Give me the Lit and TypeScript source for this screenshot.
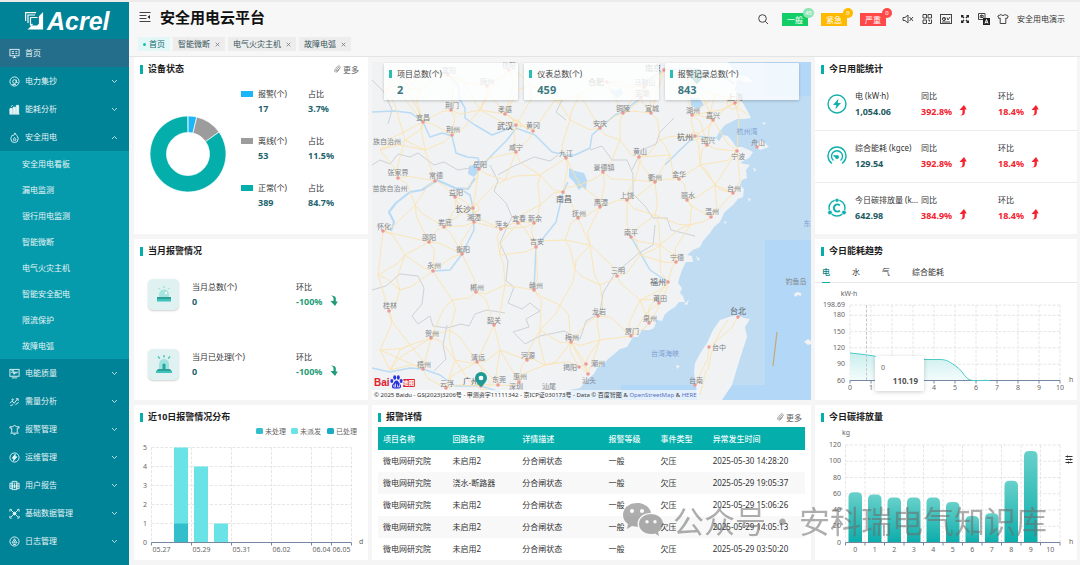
import { LitElement, html, svg, css } from "lit";
import { customElement, property } from "lit/decorators.js";
import { classMap } from "lit/directives/class-map.js";

const FONT = css`"Noto Sans", "Noto Sans CJK SC", sans-serif`;

const reset = css`
  * { box-sizing: border-box; }
  button { font: inherit; color: inherit; background: none; border: 0; padding: 0; text-align: left; }
  a { color: inherit; text-decoration: none; }
  ul, dl, dd, dt, h1, h2, p { margin: 0; padding: 0; list-style: none; font-weight: inherit; font-size: inherit; }
  svg { display: block; }
`;

/* ---------- sidebar ---------- */

const icons: Record<string, unknown> = {
  home: svg`<rect x="1" y="1.5" width="10" height="7" /><path d="M3 4h2.500M3 6h2.500M7 4h2M7 6h2M4 10.500h4M6 8.500v2" />`,
  meter: svg`<circle cx="6" cy="6" r="5" /><circle cx="6" cy="6" r="2" /><path d="M8 4v3q.6 1.400 1.500 0M3.500 9.300h4" />`,
  energy: svg`<path class="fill" d="M1 5h2.500v5.500H1zM4.500 3.500h2.500v7H4.500zM8 1.500h2.500v9H8z" /><path d="M.5 11h11M2 3l2-1.500" />`,
  flame: svg`<path d="M6.500 1c.5 2 3.500 3.500 3.500 6.500a3.800 3.800 0 0 1-8 0C2 5.500 3 5 3.500 3.500 5 4.500 6 3 6.500 1zM6 6c1.200 1 1.800 1.700 1.300 3H5c-.6-1 .3-2 1-3z" />`,
  quality: svg`<rect x="1" y="1.500" width="10" height="7.500" /><path d="M2.500 5h1l1-1.500 1 3.500 1-3 1 2 .8-1.500H10M3 10.800h6M2.500 3h3" />`,
  demand: svg`<path d="M1 8l2.500-2.500L5.500 8 9.500 3M7.500 3H10v2.300M1.500 10.500l3-1M7 9.500L10.500 7" /><circle cx="4" cy="4" r=".8" />`,
  alarm: svg`<path d="M3 9.500V4.500H1V3h2.500L6 1.500 8.500 3H11v1.500H9v5M1.500 10h9M5 11.500h2" />`,
  ops: svg`<circle cx="6" cy="6" r="5" /><path class="fill" d="M6.800 2.500L3.500 6.700h2L5 9.500l3.500-4.300h-2z" />`,
  report: svg`<path d="M3.500 1.500h5v9h-5zM1 3.500h2.500v6H1zM8.500 3.500H11v6H8.500zM1 6.500h10M5 3.500h2M5 8.500h2M6 4.500v4" />`,
  base: svg`<path d="M2 2l8 8M10 2L2 10M1 4V1.500h2M11 4V1.500H9M1 8.500V11h2M11 8.500V11H9" /><circle class="fill" cx="6" cy="6" r="1.500" />`,
  log: svg`<circle cx="6" cy="6" r="5" /><path d="M6 3L3.300 7.500h5.400zM4.500 9.300h3M6 5v1.500" />`,
};

const menu = [
  ["home", "首页", ""],
  ["meter", "电力集抄", "down"],
  ["energy", "能耗分析", "down"],
  ["flame", "安全用电", "up"],
  ["quality", "电能质量", "down"],
  ["demand", "需量分析", "down"],
  ["alarm", "报警管理", "down"],
  ["ops", "运维管理", "down"],
  ["report", "用户报告", "down"],
  ["base", "基础数据管理", "down"],
  ["log", "日志管理", "down"],
];
const submenu = ["安全用电看板", "漏电监测", "银行用电监测", "智能微断", "电气火灾主机", "智能安全配电", "限流保护", "故障电弧"];

@customElement("side-menu")
class SideMenu extends LitElement {
  static styles = [reset, css`
    :host { display: block; background: #008297; color: #e6f5f6; font: 8px/12px ${FONT}; }
    .logo { display: flex; align-items: center; height: 37px; padding: 0 0 0 25px; gap: 3px; color: #fff; }
    .word { font: italic bold 25px/30px "Liberation Sans", sans-serif; }
    .item { display: flex; align-items: center; gap: 5px; width: 100%; height: 28px; padding: 0 11px 0 9px; }
    .active { background: #246d8b; }
    .label { flex: 1; }
    .icon { fill: none; stroke: currentColor; stroke-width: 1; }
    .icon .fill { fill: currentColor; }
    .chev { fill: none; stroke: currentColor; stroke-width: .8; }
    .up { transform: rotate(180deg); }
    .sub { background: #069bac; }
    .sub a { display: block; padding: 7px 22px; }
  `];
  render() {
    return html`
      <div class="logo">
        <svg width="19" height="18" viewBox="0 0 19 18" fill="none" stroke="currentColor" stroke-width="1.200">
          <path d="M.6 9V.6H11M3 11V3h7" />
          <path fill="currentColor" d="M17.500 1.500V17H4l3-3h5.500l2-2V4.500z" />
          <path d="M5.500 13V5.500H12.500M5.500 14l2-2" />
        </svg>
        <span class="word">Acrel</span>
      </div>
      <nav>
        <ul>${menu.map(([icon, label, arrow], i) => html`
          <li>
            <button class=${classMap({ item: true, active: i === 0 })}>
              <svg class="icon" width="11" height="11" viewBox="0 0 12 12">${icons[icon]}</svg>
              <span class="label">${label}</span>
              ${arrow ? html`<svg class=${classMap({ chev: true, up: arrow === "up" })} width="7" height="5" viewBox="0 0 7 5"><path d="M1 1l2.500 2.500L6 1" /></svg>` : ""}
            </button>
            ${arrow === "up" ? html`<ul class="sub">${submenu.map((s) => html`<li><a href="#">${s}</a></li>`)}</ul>` : ""}
          </li>`)}
        </ul>
      </nav>`;
  }
}

/* ---------- header ---------- */

@customElement("top-bar")
class TopBar extends LitElement {
  static styles = [reset, css`
    :host { display: block; background: #f7f7f7; border-bottom: 1px solid #e4e4e4; font: 8px/12px ${FONT}; color: #333; }
    .row { display: flex; align-items: center; height: 34px; padding: 0 15px 0 10px; }
    .title { flex: 1; padding-left: 9px; font-size: 15px; line-height: 24px; font-weight: 700; color: #111; padding-bottom: 4px; }
    .toggle { padding-bottom: 4px; }
    .alarms { display: flex; align-items: center; gap: 13px; margin-right: 16px; }
    .alarm { position: relative; width: 26px; height: 13px; color: #fff; text-align: center; line-height: 13px; }
    .ok { background: #13ce66; }
    .warn { background: #ffba00; }
    .bad { background: #ff4949; }
    .badge { position: absolute; right: -6px; top: -5px; min-width: 10px; height: 10px; padding: 0 2px; border-radius: 5px; font-size: 6px; line-height: 10px; background: inherit; }
    .pale { background: #8fe5b6; }
    .tools { display: flex; align-items: center; gap: 7px; margin-right: 8px; }
    .ico { fill: none; stroke: #444; stroke-width: 1; }
    .ico .f { fill: #222; stroke: none; }
    .ico .w { stroke: #fff; }
    .tabs { display: flex; gap: 3px; padding: 1px 9px 5px; }
    .tab { display: flex; align-items: center; height: 14px; padding: 0 5px; gap: 5px; background: #ededed; color: #345358; }
    .on { background: #e3f8f6; gap: 3px; color: #176a70; }
    .dot { width: 3px; height: 3px; border-radius: 50%; background: #14c0b5; }
    .x { fill: none; stroke: #777; stroke-width: .8; }
  `];
  render() {
    const ico = (label: string, body: unknown) => html`
      <button aria-label=${label}><svg class="ico" width="12" height="12" viewBox="0 0 12 12">${body}</svg></button>`;
    return html`
      <div class="row">
        <button class="toggle" aria-label="折叠菜单">
          <svg class="ico" width="12" height="12" viewBox="0 0 12 12"><path d="M.5 1.500h11M.5 4.500h7M.5 7.500h7M.5 10.500h11" /><path class="f" d="M11 4v4L8.500 6z" /></svg>
        </button>
        <h1 class="title">安全用电云平台</h1>
        <div class="alarms">
          ${ico("搜索", svg`<circle cx="5.500" cy="5.500" r="3.800" /><path d="M8.300 8.300L11 11" />`)}
          <button class="alarm ok">一般<span class="badge pale">45</span></button>
          <button class="alarm warn">紧急<span class="badge">0</span></button>
          <button class="alarm bad">严重<span class="badge">0</span></button>
        </div>
        <div class="tools">
          ${ico("静音", svg`<path d="M1 4.500h2L6 2v8L3 7.500H1zM7.500 4l3.500 4M11 4L7.500 8" />`)}
          ${ico("二维码", svg`<path d="M2 1.500h3.500V5H2zM7 1.500h3.500V5H7zM2 7h3.500v3.500H2zM7 7h1.500v1.500M10.500 6.500v4H7" />`)}
          ${ico("大屏", svg`<rect x=".5" y="1.500" width="11" height="9" /><circle cx="4" cy="6" r="1.600" /><path d="M7 4.500l1 2.500 2-3M2 9h8M4 4.400V6h1.600" />`)}
          ${ico("全屏", svg`<path class="f" d="M2 2h3L4 3l1.500 1.500-1 1L3 4 2 5zM10 2v3L9 4 7.500 5.500l-1-1L8 3 7 2zM2 10V7l1 1 1.500-1.500 1 1L4 9l1 1zM10 10H7l1-1-1.500-1.500 1-1L9 8l1-1z" />`)}
          ${ico("语言", svg`<path d="M.5.5H7v6H.5zM2 2.500h3.500M3.700 1.500v3.500M2.200 3v1.500h3V3" /><rect class="f" x="5" y="5" width="7" height="7" /><path class="w" d="M7 10.500L8.500 6.500 10 10.500M7.500 9.300h2" />`)}
          ${ico("主题", svg`<path d="M4 1.500L.8 3l1 2.500 1.400-.5v5.500h5.600V5l1.400.5 1-2.500L8 1.500c-.8 1.300-3.200 1.300-4 0z" />`)}
        </div>
        <span>安全用电演示</span>
      </div>
      <nav class="tabs">
        <a class="tab on" href="#"><span class="dot"></span>首页</a>
        ${["智能微断", "电气火灾主机", "故障电弧"].map((t) => html`
          <a class="tab" href="#">${t}<svg class="x" width="5" height="5" viewBox="0 0 5 5"><path d="M.7.7l3.600 3.600M4.300.7L.7 4.300" /></svg></a>`)}
      </nav>`;
  }
}

/* ---------- card shell ---------- */

@customElement("panel-card")
class PanelCard extends LitElement {
  @property() heading = "";
  @property({ type: Boolean }) more = false;
  static styles = [reset, css`
    :host { display: flex; flex-direction: column; background: #fff; font: 8px/15px ${FONT}; }
    .head { display: flex; align-items: center; height: 22px; padding: 2px 9px 0 6px; gap: 5px; }
    .bar { width: 3px; height: 9px; background: #04aeab; }
    .title { flex: 1; font-size: 9px; line-height: 20px; font-weight: 700; color: #1c1c1c; }
    .more { display: flex; align-items: center; gap: 2px; color: #666; }
  `];
  render() {
    return html`
      <div class="head">
        <span class="bar"></span>
        <h2 class="title">${this.heading}</h2>
        ${this.more ? html`<a class="more" href="#"><svg width="7" height="8" viewBox="0 0 7 8" fill="none" stroke="#888" stroke-width=".8"><path d="M5 2L2.200 5.200q-.3 1 .8.8L6 3q.8-1.500-.5-2T3.500 1.500L1 4.500Q0 6.500 1.500 7T4 6l1.500-1.500" /></svg>更多</a>` : ""}
      </div>
      <slot></slot>`;
  }
}

const arrowUp = html`<svg class="arrow" width="8" height="11" viewBox="0 0 8 11" fill="#f5222d"><path d="M5 0l2.800 4.500H5.800V8Q5.500 10.500 1 10.500 3.500 9.500 3.500 8V5H.5z" /></svg>`;
const arrowDown = html`<svg class="arrow" width="8" height="11" viewBox="0 0 8 11" fill="#1f9c77"><path d="M5 11L7.800 6.500H5.800V3Q5.500.5 1 .5 3.500 1.500 3.500 3V6H.5z" /></svg>`;

/* ---------- device status ---------- */

const devices = [
  { name: "报警", count: 17, share: 3.7, color: "#1bb6f7" },
  { name: "离线", count: 53, share: 11.5, color: "#9c9c9c" },
  { name: "正常", count: 389, share: 84.7, color: "#04aeab" },
];

@customElement("device-status")
class DeviceStatus extends LitElement {
  static styles = [reset, css`
    :host { display: flex; font: 8px/15px ${FONT}; color: #333; }
    .ring { flex: 107; display: flex; justify-content: center; align-items: flex-start; padding-top: 36px; }
    .ring svg { width: 78px; height: 78px; }
    .list { flex: 127; display: grid; align-content: start; gap: 17px; padding: 7px 0; }
    .row { display: grid; grid-template-columns: 12px 45px 1fr; column-gap: 5px; }
    .sw { width: 12px; height: 6px; margin-top: 5px; grid-row: span 2; }
    .num { grid-column: 2; font-size: 9px; font-weight: 700; color: #22636d; }
    .pct { grid-column: 3; }
  `];
  render() {
    let from = 0;
    const pt = (p: number, r: number) => {
      const a = (p / 100) * 2 * Math.PI;
      return `${39 + r * Math.sin(a)} ${39 - r * Math.cos(a)}`;
    };
    return html`
      <div class="ring">
        <svg viewBox="0 0 78 78" role="img" aria-label="设备状态">
          ${devices.map((d) => {
            const a = from;
            const b = (from += d.share);
            const big = b - a > 50 ? 1 : 0;
            return svg`<path fill=${d.color} stroke="#fff" stroke-width=".7" d="M${pt(a, 38)}A38 38 0 ${big} 1 ${pt(b, 38)}L${pt(b, 21.5)}A21.500 21.500 0 ${big} 0 ${pt(a, 21.5)}Z" />`;
          })}
        </svg>
      </div>
      <div class="list">
        ${devices.map((d) => html`
          <div class="row">
            <span class="sw" style="background:${d.color}"></span><span>${d.name}(个)</span><span>占比</span>
            <span class="num">${d.count}</span><span class="num pct">${d.share}%</span>
          </div>`)}
      </div>`;
  }
}

/* ---------- month alarms ---------- */

@customElement("month-alarms")
class MonthAlarms extends LitElement {
  static styles = [reset, css`
    :host { display: grid; gap: 39px; padding: 18px 14px 20px; font: 8px/15px ${FONT}; color: #333; }
    .row { display: grid; grid-template-columns: 31px 11fr 7fr; column-gap: 13px; }
    .box { width: 31px; height: 31px; border-radius: 5px; background: #dff1f0; box-shadow: 0 1px 2px #00000030; display: grid; place-items: center; }
    .num { font-size: 9px; font-weight: 700; color: #22636d; }
    .down { display: flex; align-items: center; gap: 7px; color: #1f9c77; }
    .down .arrow { margin-bottom: 3px; }
  `];
  render() {
    const lamps = [
      svg`<path fill="#a6e4e0" d="M5 12V9.500a5 5 0 0 1 10 0V12z" /><path fill="#2f9f98" d="M3 12h14v4H3z" /><path fill="#3cc4bc" d="M3 14h14v2.500H3z" /><circle cx="12" cy="8" r="1.200" fill="#fff" /><path stroke="#8adad5" d="M10 1v2M4.500 3L6 4.500M15.500 3L14 4.500" />`,
      svg`<path fill="#9fe2de" d="M5 14V9a5 5 0 0 1 10 0v5z" /><path fill="#24a8a1" d="M8.500 14V9.500q1.500-2 3 0V14z" /><path fill="#2f9f98" d="M4 14h12l2 2.500H2z" /><path fill="#3cc4bc" d="M2 16h16v2H2z" /><path stroke="#44c5be" stroke-width="1.400" d="M10 0v2.500M4 1.500l1.800 2M16 1.500l-1.800 2" />`,
    ];
    return ["当月总数(个)", "当月已处理(个)"].map((label, i) => html`
      <div class="row">
        <span class="box"><svg width="20" height="20" viewBox="0 0 20 20">${lamps[i]}</svg></span>
        <div><p>${label}</p><p class="num">0</p></div>
        <div><p>环比</p><p class="num down">-100%${arrowDown}</p></div>
      </div>`);
  }
}

/* ---------- today energy ---------- */

@customElement("today-energy")
class TodayEnergy extends LitElement {
  static styles = [reset, css`
    :host { flex: 1; display: flex; flex-direction: column; font: 8px/16px ${FONT}; color: #333; }
    .row { flex: 1; display: grid; grid-template-columns: 26px 64px 75px 1fr; column-gap: 2px; align-items: center; padding: 0 0 2px 12px; border-bottom: 1px solid #ececec; }
    .row:last-child { border-bottom: 0; }
    .name { white-space: nowrap; overflow: hidden; text-overflow: ellipsis; }
    .num { font-size: 9px; font-weight: 700; color: #1d5a63; }
    .up { display: flex; align-items: center; gap: 7px; color: #f5222d; }
    .up .arrow { margin-bottom: 3px; }
  `];
  render() {
    const rows: [unknown, string, string, string][] = [
      [svg`<circle cx="10" cy="10" r="9" /><path class="f" fill="#12b0ad" stroke="none" d="M11.500 4.500L6 11h3.300l-1 4.500L14 9h-3.300z" />`, "电 (kW·h)", "1,054.06", "392.8%"],
      [svg`<path d="M5 17.500a9 9 0 1 1 10 0M6.500 14.500a5.500 5.500 0 1 1 7 0" /><circle cx="10" cy="11" r="2" fill="#12b0ad" stroke="none" /><path d="M6.500 9.500L10 11" />`, "综合能耗 (kgce)", "129.54", "392.8%"],
      [svg`<circle cx="10" cy="10" r="8" /><path stroke-width="2" d="M12.800 7.500a3.500 3.500 0 1 0 0 5" /><g fill="#12b0ad" stroke="#fff" stroke-width=".6"><circle cx="10" cy="2.300" r="2" /><circle cx="3" cy="14.500" r="2.300" /><circle cx="17" cy="14.500" r="2.300" /></g>`, "今日碳排放量 (kg)", "642.98", "384.9%"],
    ];
    return rows.map(([icon, name, value, yoy]) => html`
      <div class="row">
        <svg width="20" height="20" viewBox="0 0 20 20" fill="none" stroke="#12b0ad" stroke-width="1.400">${icon}</svg>
        <div class="name"><p class="name">${name}</p><p class="num">${value}</p></div>
        <div><p>同比</p><p class="num up">${yoy}${arrowUp}</p></div>
        <div><p>环比</p><p class="num up">18.4%${arrowUp}</p></div>
      </div>`);
  }
}

/* ---------- charts ---------- */

const chartStyles = css`
  :host { display: block; font: 7px/12px ${FONT}; }
  .chart { width: 100%; height: auto; font-size: 7px; fill: #666; }
  .mid { text-anchor: middle; }
  .end { text-anchor: end; }
  .grid { fill: none; stroke: #e6e6e6; stroke-width: 1; stroke-dasharray: 3 1.500; }
  .pointer { stroke: #c4c8cc; }
  .axis { fill: none; stroke: #7488a3; stroke-width: 1; }
`;

@customElement("alarm-chart")
class AlarmChart extends LitElement {
  static styles = [reset, chartStyles];
  render() {
    const x = (i: number) => 17.5 + i * 20;
    const y = (v: number) => 115.5 - v * 19;
    const days: [number, string][] = [[0, "05.27"], [2, "05.29"], [4, "05.31"], [6, "06.02"], [8, "06.04"], [9, "06.05"]];
    const legend: [number, string, string][] = [[122, "#32bfcb", "未处理"], [157, "#6ae3e6", "未派发"], [193, "#1aacc6", "已处理"]];
    return html`
      <svg class="chart" viewBox="0 0 234 133" role="img" aria-label="近10日报警情况分布">
        ${legend.map(([lx, c, t]) => svg`<rect x=${lx} y="1" width="7" height="6" rx="1.500" fill=${c} /><text x=${lx + 9} y="6.500">${t}</text>`)}
        ${[0, 1, 2, 3, 4, 5].map((v) => svg`
          ${v ? svg`<path class="grid" d="M17.500 ${y(v)}H217.500" />` : ""}
          <text class="end" x="13" y=${y(v) + 2}>${v}</text>`)}
        ${[...days.map((d) => d[0]), 10].map((i) => svg`<path class="grid" d="M${x(i)} 20.500V115.500" />`)}
        <rect x="40" y=${y(5)} width="14" height="95" fill="#6ae3e6" />
        <rect x="40" y=${y(1)} width="14" height="19" fill="#32bfcb" />
        <rect x="60" y=${y(4)} width="14" height="76" fill="#6ae3e6" />
        <rect x="80" y=${y(1)} width="14" height="19" fill="#6ae3e6" />
        <path class="axis" d="M17.500 115.500H217.500${[...days.map((d) => d[0]), 10].map((i) => `M${x(i)} 115.500v3`).join("")}" />
        ${days.map(([i, t]) => svg`<text class="mid" x=${x(i) + 10} y="125">${t}</text>`)}
        <text x="225" y="117">d</text>
      </svg>`;
  }
}

@customElement("trend-chart")
class TrendChart extends LitElement {
  static styles = [reset, chartStyles, css`
    .tabs { display: flex; gap: 22px; height: 22px; padding-left: 7px; border-bottom: 1px solid #e8e8e8; font-size: 8px; line-height: 20px; color: #333; }
    .tab { height: 22px; }
    .on { color: #08807f; font-weight: 500; border-bottom: 1px solid #04aeab; }
    .line { fill: none; stroke: #4ccac6; }
    .shadow { filter: drop-shadow(0 1px 2px #0003); }
    .tip { font-size: 8px; font-weight: 700; fill: #555; }
  `];
  render() {
    const x = (i: number) => 35 + i * 21;
    const y = (v: number) => 97.5 - (v - 60) * 0.5435;
    const ticks: [number, string][] = [[198.69, "198.69"], [180, "180"], [150, "150"], [120, "120"], [90, "90"], [60, "60"]];
    const curve = "M35 70C45 71 55 72 64 74C80 76 95 76.500 109 76.500H125C132 76.500 135 79 142 84C149 89 150 97 158 97.500C163 98 168 97 175 97.500";
    return html`
      <div class="tabs" role="tablist">
        ${["电", "水", "气", "综合能耗"].map((t, i) => html`<button role="tab" class=${classMap({ tab: true, on: i === 0 })}>${t}</button>`)}
      </div>
      <svg class="chart" viewBox="0 0 262 117" role="img" aria-label="今日能耗趋势">
        <defs><linearGradient id="area" x2="0" y2="1"><stop stop-color="#c9efee" /><stop offset="1" stop-color="#f4fcfc" /></linearGradient></defs>
        <text class="mid" x="34" y="12.500">kW·h</text>
        ${ticks.map(([v, t]) => svg`<path class="grid" d="M35 ${y(v)}H245" /><text class="end" x="30" y=${y(v) + 2}>${t}</text>`)}
        ${Array.from({ length: 11 }, (_, i) => svg`<path class="grid" d="M${x(i)} 22V97.500" /><text class="mid" x=${x(i)} y="107">${i}</text>`)}
        <path fill="url(#area)" d="${curve}H35Z" />
        <path class="axis" d="M35 97.500H245${Array.from({ length: 11 }, (_, i) => `M${x(i)} 97.500v3`).join("")}" />
        <path class="line" d=${curve} />
        <path class="grid pointer" d="M51.500 22V97.500" />
        <text x="254" y="99">h</text>
        <rect class="shadow" x="60" y="73" width="49" height="35" rx="2" fill="#fff" />
        <text x="66" y="87">0</text>
        <text class="tip end" x="103" y="100.500">110.19</text>
      </svg>`;
  }
}

@customElement("carbon-chart")
class CarbonChart extends LitElement {
  static styles = [reset, chartStyles];
  render() {
    const data = [62, 59, 55.5, 55.5, 55.5, 50, 32.5, 36, 76, 112.5];
    const w = 19.5;
    const y = (v: number) => 115.5 - v * 0.8125;
    const seams = Array.from({ length: 12 }, (_, i) => 30.5 + i * w);
    return html`
      <svg class="chart" viewBox="0 0 262 133" role="img" aria-label="今日碳排放量">
        <defs><linearGradient id="bar" x2="0" y2="1"><stop stop-color="#68d0ca" /><stop offset="1" stop-color="#0badaa" /></linearGradient></defs>
        <text class="mid" x="31" y="7.500">kg</text>
        ${[0, 20, 40, 60, 80, 100, 120].map((v) => svg`
          ${v ? svg`<path class="grid" d="M30.500 ${y(v)}H245" />` : ""}<text class="end" x="26" y=${y(v) + 2}>${v}</text>`)}
        ${seams.map((s) => svg`<path class="grid" d="M${s} 18V115.500" />`)}
        ${data.map((v, i) => svg`<path fill="url(#bar)" d="M${33.5 + i * w} 115.500V${y(v) + 5}q0-5 5-5h3.500q5 0 5 5V115.500z" />`)}
        <path class="axis" d="M30.500 115.500H245${seams.map((s) => `M${s} 115.500v3`).join("")}" />
        ${Array.from({ length: 11 }, (_, i) => svg`<text class="mid" x=${40.25 + i * w} y="125">${i}</text>`)}
        <text x="254" y="117">h</text>
        <path stroke="#333" fill="none" d="M250.500 29.500h7M250.500 32.500h7M250.500 35.500h7M252.500 28.500v2M255.500 31.500v2M253.500 34.500v2" />
      </svg>`;
  }
}

/* ---------- alarm table ---------- */

@customElement("alarm-table")
class AlarmTable extends LitElement {
  static styles = [reset, css`
    :host { display: block; padding: 0 6px; font: 8px/12px ${FONT}; color: #333; }
    table { width: 100%; border-collapse: collapse; table-layout: fixed; }
    th, td { height: 22px; padding: 0 0 0 5px; text-align: left; font-weight: 400; white-space: nowrap; }
    th { height: 23px; background: #04aeab; color: #e9fbfa; font-weight: 500; }
    tbody tr:nth-child(even) { background: #f8f8f8; }
    .c1, .c2 { width: 16.3%; } .c3 { width: 20.2%; } .c4, .c5 { width: 12.2%; }
  `];
  render() {
    const rows = [
      ["未启用2", "2025-05-30 14:28:20"],
      ["浇水-断路器", "2025-05-29 19:05:37"],
      ["未启用2", "2025-05-29 15:06:26"],
      ["未启用2", "2025-05-29 14:05:13"],
      ["未启用2", "2025-05-29 03:50:20"],
    ];
    return html`
      <table>
        <thead><tr><th class="c1">项目名称</th><th class="c2">回路名称</th><th class="c3">详情描述</th><th class="c4">报警等级</th><th class="c5">事件类型</th><th>异常发生时间</th></tr></thead>
        <tbody>${rows.map(([loop, time]) => html`
          <tr><td>微电网研究院</td><td>${loop}</td><td>分合闸状态</td><td>一般</td><td>欠压</td><td>${time}</td></tr>`)}
        </tbody>
      </table>`;
  }
}

/* ---------- map ---------- */

/* name, label x, label y, dot x, dot y, large label */
const cities: [string, number, number, number, number, boolean?][] = [
  ["襄阳", 449, 70, 448, 75], ["信阳", 509, 65, 509, 70], ["随州", 487, 81, 487, 86], ["荆门", 452, 105, 451, 110],
  ["孝感", 505, 109, 505, 114], ["宜昌", 423, 117, 423, 122], ["荆州", 453, 129, 452, 135], ["武汉", 505, 126, 516, 125, true],
  ["黄冈", 533, 125, 533, 131], ["咸宁", 516, 147, 516, 152], ["九江", 566, 153, 566, 158], ["岳阳", 480, 164, 479, 169],
  ["张家界", 398, 172, 398, 178], ["常德", 436, 175, 435, 181], ["益阳", 456, 192, 455, 197], ["长沙", 463, 209, 473, 208, true],
  ["湘潭", 474, 217, 474, 222], ["娄底", 445, 222, 444, 227], ["宜春", 519, 218, 518, 223], ["新余", 535, 218, 534, 223],
  ["萍乡", 502, 224, 501, 229], ["南昌", 564, 199, 563, 192, true], ["抚州", 579, 213, 578, 218], ["怀化", 384, 226, 383, 231],
  ["合肥", 596, 82, 607, 82, true], ["南京", 653, 68, 664, 70, true], ["马鞍山", 645, 82, 644, 87], ["芜湖", 642, 93, 641, 98],
  ["铜陵", 623, 108, 623, 113], ["宣城", 652, 108, 651, 113], ["安庆", 600, 123, 600, 128], ["湖州", 693, 110, 692, 115],
  ["嘉兴", 713, 115, 713, 120], ["杭州", 685, 137, 695, 136, true], ["绍兴", 708, 140, 707, 145], ["上海", 735, 97, 735, 103, true],
  ["舟山", 758, 142, 757, 147], ["宁波", 738, 156, 737, 151], ["黄山", 640, 151, 639, 157], ["景德镇", 604, 167, 603, 172],
  ["衢州", 655, 177, 655, 182], ["金华", 679, 174, 679, 179], ["台州", 734, 188, 733, 193], ["上饶", 627, 195, 627, 200],
  ["丽水", 688, 195, 687, 200], ["鹰潭", 601, 202, 600, 207], ["温州", 712, 211, 711, 217], ["南平", 631, 232, 631, 237],
  ["邵阳", 429, 237, 429, 242], ["衡阳", 463, 249, 462, 254], ["吉安", 537, 241, 536, 247], ["永州", 434, 265, 433, 271],
  ["郴州", 477, 287, 476, 292], ["赣州", 536, 285, 534, 290], ["桂林", 390, 305, 389, 311], ["韶关", 494, 320, 494, 325],
  ["龙岩", 599, 311, 598, 316], ["贺州", 432, 333, 431, 338], ["梅州", 572, 337, 571, 342], ["清远", 478, 357, 477, 362],
  ["河源", 528, 355, 527, 360], ["梧州", 424, 364, 423, 369], ["潮州", 598, 363, 586, 364], ["揭阳", 570, 367, 579, 367],
  ["汕头", 589, 380, 588, 374], ["惠州", 520, 376, 519, 382], ["云浮", 447, 383, 446, 388], ["广州", 471, 381, 481, 386, true],
  ["东莞", 499, 379, 498, 385], ["宁德", 677, 257, 676, 262], ["三明", 618, 270, 617, 276], ["福州", 658, 282, 668, 282, true],
  ["莆田", 660, 298, 659, 303], ["泉州", 650, 318, 649, 323], ["厦门", 632, 331, 631, 336],
  ["台北", 738, 311, 738, 317, true], ["台中", 719, 347, 709, 347], ["台南", 696, 380, 695, 385],
];

/* junctions that carry roads but no label */
const junctions: [number, number][] = [
  [385, 90], [405, 140], [380, 150], [415, 205], [405, 255], [378, 275], [400, 290], [452, 300], [410, 345], [380, 350],
  [450, 330], [505, 180], [540, 175], [500, 255], [505, 285], [565, 240], [575, 270], [560, 305], [540, 330], [590, 245],
  [655, 215], [660, 245], [640, 255], [600, 285], [640, 300], [555, 100], [570, 120], [580, 95], [420, 90], [400, 70],
  [660, 140], [670, 155], [700, 165], [715, 185], [690, 225], [600, 340], [500, 350], [455, 360], [390, 370], [540, 205],
  [425, 150], [480, 110], [530, 85], [715, 95], [690, 80], [545, 365], [635, 180], [580, 185], [620, 140],
];

const isIsland = (x: number, y: number) => x > 690 && y > 300;

function roads(): string {
  const pts: [number, number][] = [...cities.filter((c) => c[0] !== "舟山").map((c): [number, number] => [c[3], c[4]]), ...junctions];
  const seen = new Set<string>();
  let d = "";
  pts.forEach(([x, y], i) => {
    pts
      .map(([a, b], j) => ({ j, a, b, r: Math.hypot(a - x, b - y) }))
      .filter((n) => n.j !== i && n.r < 60 && isIsland(n.a, n.b) === isIsland(x, y))
      .sort((m, n) => m.r - n.r)
      .slice(0, 4)
      .forEach(({ j, a, b }) => {
        const key = Math.min(i, j) + "-" + Math.max(i, j);
        if (seen.has(key)) return;
        seen.add(key);
        const k = (((i * 7 + j * 3) % 5) - 2) * 0.07;
        const p = (t: number, s: number) => `${(x + (a - x) * t + (b - y) * s).toFixed(1)} ${(y + (b - y) * t - (a - x) * s).toFixed(1)}`;
        d += `M${x} ${y}L${p(0.3, k)} ${p(0.65, k * 0.5)} ${a} ${b}`;
      });
  });
  return d;
}

const coast =
  "M372 62H728L733 70 737 80 735 90 741 100 747 110 751 118 744 119 737 119 725 125 720 131 716 138 719 141 723 135 728 136 733 142 736 147 742 147 747 149 753 152 749 158 745 160 740 163 750 165 746 170 747 178 742 180 740 185 744 189 743 197 738 199 733 205 727 210 724 213 720 222 714 227 710 233 703 241 700 247 693 250 687 255 692 256 693 262 686 262 682 270 680 276 678 283 682 288 680 293 683 296 685 302 679 302 675 307 670 310 665 314 662 321 657 320 654 328 650 330 642 330 638 337 633 337 627 347 620 349 613 355 608 359 603 365 597 368 594 374 587 380 580 388 570 390 560 394 552 400H372z";

@customElement("region-map")
class RegionMap extends LitElement {
  static styles = [reset, css`
    :host { display: block; position: relative; overflow: hidden; font: 8px/15px ${FONT}; color: #444; background: #f0f2f4; }
    .geo { position: absolute; inset: 0; width: 100%; height: 100%; }
    .city { font-size: 7px; fill: #82858a; text-anchor: middle; }
    .large { font-size: 8px; fill: #5f6368; }
    .sea { fill: #7f9ed0; }
    .stats { position: absolute; inset: 1px 12px auto; display: grid; grid-template-columns: repeat(3, 1fr); gap: 6px; }
    .stat { padding: 3px 5px 2px; background: #ffffffcc; border-radius: 1px; box-shadow: 0 1px 3px #0003; display: grid; grid-template-columns: 3px 1fr; column-gap: 5px; align-items: center; }
    .bar { height: 8px; background: #2cbcb6; }
    .num { grid-column: 2; font-size: 11px; line-height: 17px; font-weight: 700; color: #3b7983; }
    .brand { position: absolute; left: 2px; bottom: 11px; display: flex; align-items: center; font: bold 10px/13px "Liberation Sans", "Noto Sans CJK SC", sans-serif; color: #e0202c; }
    .tag { background: #e0202c; color: #fff; font-size: 6px; line-height: 8px; margin-top: 2px; border-radius: 1px; }
    .credit { position: absolute; left: 0; bottom: 0; padding: 0 2px; background: #ffffffa0; font-size: 6px; line-height: 10px; color: #333; white-space: nowrap; }
    .credit a { color: #5a74c4; }
  `];
  render() {
    return html`
      <svg class="geo" viewBox="372 62 439 338" preserveAspectRatio="xMidYMid slice" role="img" aria-label="项目分布地图">
        <rect x="372" y="62" width="439" height="338" fill="#bfdcf3" />
        <path fill="#b3d7f6" d="M765 62h46v34h-46zM765 240h46v160H621v-15h144z" />
        <path fill="#f0f2f4" d=${coast} />
        <path fill="#f0f2f4" d="M737 315l7 3 6 1-5 8 2 10-4 12-5 16-6 20-10 15H698l-2-14-2-13 1-10 6-11 6-9 6-13 7-10 9-3zM794 294l3-2 4 1v3l-3-1-3 2zM804 342l4-3 3 2v3l-3 1zM753 168l3 1-1 3zM748 198l3 1-2 3zM724 221l3 1-2 2zM762 122l4 1-2 2zM676 365l4 1-3 3zM696 256l4 3-2 2zM690 246l3 2-3 1zM689 300l-2 5-3-1zM760 140l5 3 4 4-9 3-5-4zM736 74l12 3 6 6-9-1-9-3z" />
        <path fill="#b9dbf5" d="M469 166l8-2 2 7-5 6-6-3zM569 168l6 3 9 2 3 7-1 10-4-3-3 3-5-8-5-5zM609 88l7 3 5-3 2 6-6 4-5-4zM690 97l9 1 5 7-5 4-8-3z" />
        <g fill="none" stroke="#b9dbf5" stroke-width="1.500" stroke-linejoin="round">
          <path d="M372 112L395 111 411 113 423 122 430 137 442 133 452 136 456 153 467 157 478 158 481 167 492 155 507 140 516 128 535 135 552 152 566 155 575 155 590 148 592 135 600 128 615 115 623 112 638 100 648 80 665 70 690 68 720 75 735 84" />
          <path d="M448 75L458 85 460 100 465 108 465 118 475 125 492 135 505 130 516 125" />
          <path stroke-width="2.200" d="M391 231L394 222 389 212 396 203 410 192 422 190 437 180 455 188 468 189 475 178" />
          <path d="M372 368L390 372 410 368 423 369 440 375 455 386 481 386 500 392M473 208L470 195 462 190M473 208L474 230 462 254 450 270 433 271M563 192L568 182M563 192L556 222 536 247 534 290M668 282L650 270 631 237M695 136L680 150 665 165M716 138L695 136" />
        </g>
        <path fill="none" stroke="#cfd2d6" stroke-width="1" stroke-linejoin="bevel" d="M372 165l8-5 10 4 8-10 12 3 8-4 16 12 10-3 14 8 12-2M490 165l8 16-4 10 12 12 6 14-6 12-6 14 8 18-2 20 8 6-6 16 14 6 8-6 10 8-14 8 3 8-16 5 12 12 15-8 24-5 16 8 6-18 14-8 3-20 12-20 10-8 14-12 14-8 2-20M498 175l14-8 22-10 16 4 8-6M550 90l12 10-6 12 10 8M372 290l14-4 14-12 18 2 6 12-2 16-10 12 6 8 12-8 3 10 14 2 14-4 8 2 6-12 12-4 18 3M447 325l-4 20 3 14-12 12M590 150l12-4 10 14 15 0 6 14 0 20 12 12 8 12 14 0 4 12 24 6M632 170l10-20 14-6 4-12 14-14M372 80l12 12 8 18-4 14" />
        <path fill="none" stroke="#fce3ae" stroke-width=".9" stroke-linejoin="round" d=${roads()} />
        <g fill="none" stroke="#fce3ae" stroke-width=".9"><circle cx="516" cy="125" r="5" /><circle cx="475" cy="208" r="4" /><circle cx="733" cy="103" r="6" /><circle cx="695" cy="136" r="4" /><circle cx="484" cy="384" r="6" /><path d="M720 95l28 20M722 110l22-12M708 370q4-30 20-50M700 395q4-15 6-25" /></g>
        <path d="M777 332l-4 34" stroke="#c9a873" stroke-width="1.200" />
        ${cities.map(([name, lx, ly, x, y, large]) => svg`
          <circle cx=${x} cy=${y} r="1.800" fill="#eb9b97" />
          <text class=${classMap({ city: true, large: !!large })} x=${lx} y=${ly + 3}>${name}</text>`)}
        <text class="city" x="387" y="144">族自治州</text>
        <text class="city" x="390" y="191">苗族自治州</text>
        <text class="city" x="516" y="389">深圳</text>
        <text class="city" x="549" y="389">汕尾</text>
        <text class="city sea" x="747" y="134">杭州湾</text>
        <text class="city sea" x="665" y="356">台湾海峡</text>
        <text class="city sea" x="807" y="226">东</text>
        <text class="city" x="796" y="284">钓鱼岛</text>
        <path fill="#1f9a94" d="M481 387q-6-5-6-9a6 6 0 0 1 12 0q0 4-6 9zM697 84q-6-5-6-9a6 6 0 0 1 12 0q0 4-6 9z" />
        <circle cx="481" cy="378" r="2.300" fill="#fff" />
      </svg>
      <div class="stats">
        ${[["项目总数(个)", 2], ["仪表总数(个)", 459], ["报警记录总数(个)", 843]].map(([k, v]) => html`
          <div class="stat"><span class="bar"></span><span>${k}</span><span class="num">${v}</span></div>`)}
      </div>
      <div class="brand">Bai<svg width="13" height="14" viewBox="0 0 13 14" fill="#2a32dd"><ellipse cx="1.800" cy="6" rx="1.500" ry="2" /><ellipse cx="4.700" cy="2.500" rx="1.500" ry="2.200" /><ellipse cx="8.300" cy="2.500" rx="1.500" ry="2.200" /><ellipse cx="11.200" cy="6" rx="1.500" ry="2" /><path d="M6.500 5.500c2 0 2 2 3.500 3.500s1.500 4.500-1 4.500H4c-2.500 0-2.500-3-1-4.500s1.500-3.500 3.500-3.500z" /><path fill="none" stroke="#fff" stroke-width=".7" d="M5.500 8.500v3.500H4q-1-1.300.2-2h1.300M7.500 9.500v2.500h2v-2.500" /></svg><span class="tag">地图</span></div>
      <div class="credit">© 2025 Baidu - GS(2023)3206号 - 甲测资字11111342 - 京ICP证030173号 - Data © 百度智图 &amp; <a href="#">OpenStreetMap</a> &amp; <a href="#">HERE</a></div>`;
  }
}

/* ---------- page ---------- */

@customElement("app-root")
class AppRoot extends LitElement {
  static styles = [reset, css`
    :host { display: grid; grid-template-columns: 129px 1fr; min-height: 100vh; position: relative; border-top: 2px solid #ebebeb; background: #f5f5f5; box-sizing: border-box; overflow: hidden; font: 8px/12px ${FONT}; }
    .main { display: flex; flex-direction: column; min-width: 0; }
    .board { flex: 1; display: grid; grid-template-columns: 234fr 439fr 262fr; grid-template-rows: minmax(177px, 177fr) minmax(161px, 161fr) minmax(155px, 155fr); gap: 5px 4px; padding: 0 3px 5px 5px; }
    .board > * { min-width: 0; }
    .map { grid-column: 2; grid-row: 1 / span 2; margin-top: 5px; }
    .left { grid-column: 1; }
    .right { grid-column: 3; }
    .r1 { grid-row: 1; }
    .r2 { grid-row: 2; }
    .r3 { grid-row: 3; }
    .mark { position: absolute; right: 33px; bottom: 25px; display: flex; align-items: center; gap: 1px; opacity: .55; pointer-events: none; color: #6c6c6c; font: 400 31px/40px "Noto Sans CJK SC", sans-serif; }
    .wechat { margin-right: 8px; }
  `];
  render() {
    return html`
      <side-menu></side-menu>
      <div class="main">
        <top-bar></top-bar>
        <main class="board">
          <panel-card class="left r1" heading="设备状态" more><device-status></device-status></panel-card>
          <panel-card class="left r2" heading="当月报警情况"><month-alarms></month-alarms></panel-card>
          <panel-card class="left r3" heading="近10日报警情况分布"><alarm-chart></alarm-chart></panel-card>
          <region-map class="map"></region-map>
          <panel-card class="r3" heading="报警详情" more><alarm-table></alarm-table></panel-card>
          <panel-card class="right r1" heading="今日用能统计"><today-energy></today-energy></panel-card>
          <panel-card class="right r2" heading="今日能耗趋势"><trend-chart></trend-chart></panel-card>
          <panel-card class="right r3" heading="今日碳排放量"><carbon-chart></carbon-chart></panel-card>
        </main>
      </div>
      <div class="mark">
        <svg class="wechat" width="42" height="36" viewBox="0 0 42 36" fill="currentColor">
          <path fill-rule="evenodd" d="M15 1C7 1 1 6 1 13c0 4 2 7 5 9l-1 5 5-3c2 .6 4 .8 6 .7C14 17 20 11 29 11 28 5 22 1 15 1zM10 7a2 2 0 1 1 0 4 2 2 0 0 1 0-4zM20 7a2 2 0 1 1 0 4 2 2 0 0 1 0-4z" />
          <path fill-rule="evenodd" d="M29 12c-7 0-12 4.500-12 10s5 10 12 10c1.500 0 3-.2 4-.6l4 2.600-1-4c3-2 5-4.500 5-8 0-5.500-5-10-12-10zM25 18a1.700 1.700 0 1 1 0 3.400 1.700 1.700 0 0 1 0-3.400zM33 18a1.700 1.700 0 1 1 0 3.400 1.700 1.700 0 0 1 0-3.400z" />
        </svg>
        <span>公众号</span><span>·</span><span>安科瑞电气知识库</span>
      </div>`;
  }
}
